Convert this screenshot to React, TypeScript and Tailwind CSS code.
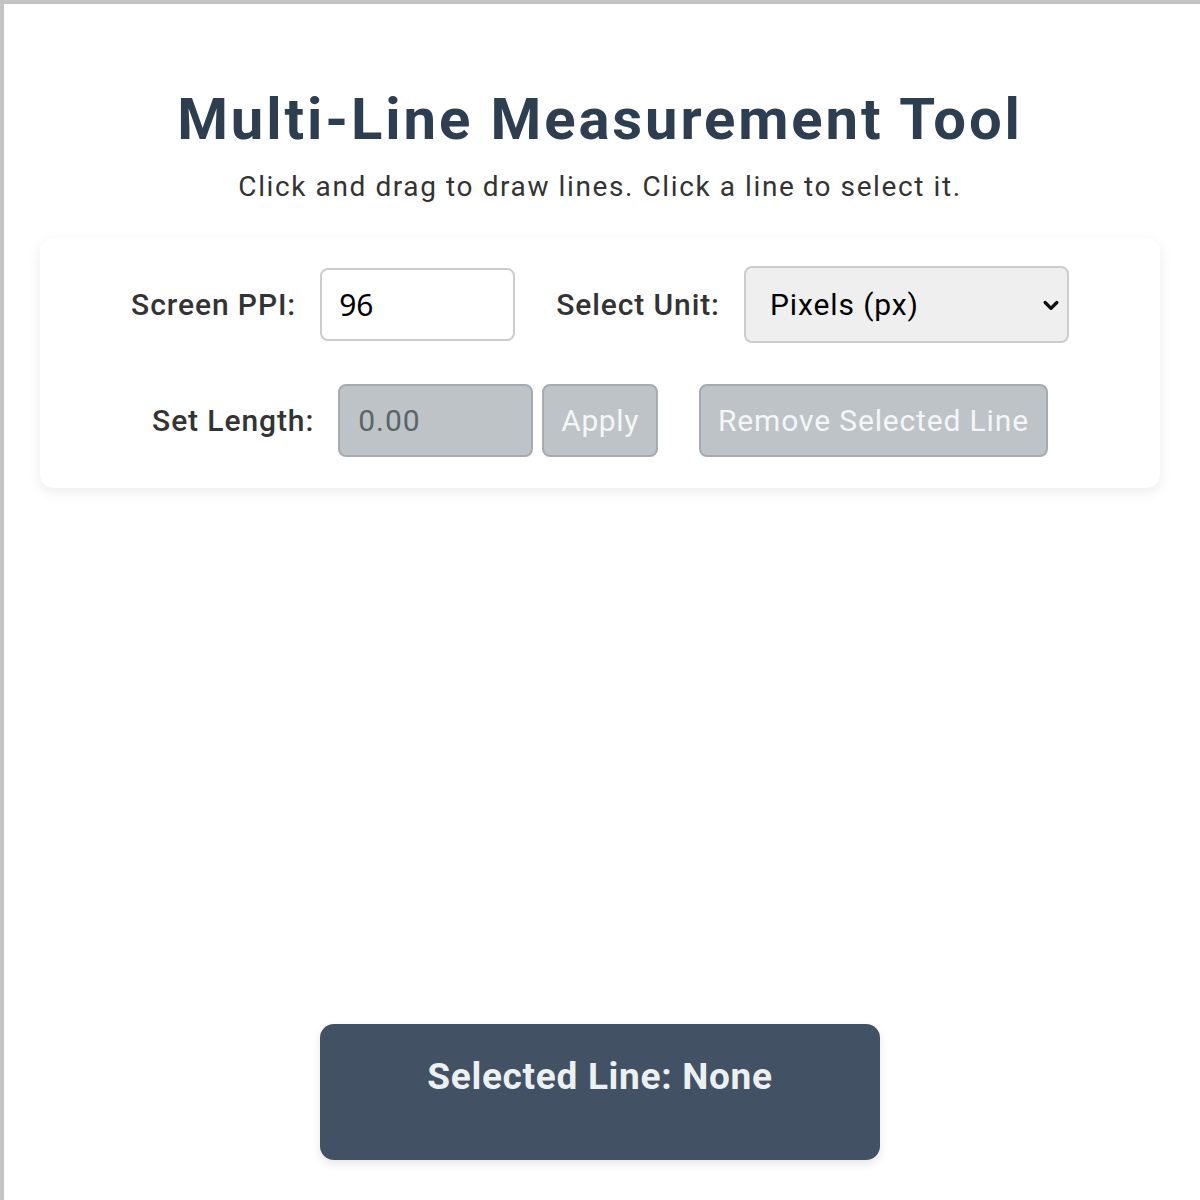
import { useState } from 'react'

export default function App() {
  const [ppi, setPpi] = useState('96')
  const [unit, setUnit] = useState('px')

  return (
    <div className="flex flex-col items-center h-[1200px] pl-9 pr-10 border-t-4 border-l-4 border-[#c4c4c4] bg-white font-['Roboto',sans-serif]">
      <h1 className="mt-[81px] text-[58px] leading-[68px] font-bold tracking-[2.9px] text-[#2c3e50]">
        Multi-Line Measurement Tool
      </h1>
      <p className="mt-[16px] text-[28px] leading-[36px] tracking-[1.6px] text-[#333333]">
        Click and drag to draw lines. Click a line to select it.
      </p>

      <section className="flex flex-col gap-[41px] w-full mt-[33px] pt-[28px] pb-[31px] rounded-[14px] bg-white shadow-[0_4px_14px_rgba(0,0,0,0.08)]">
        <div className="flex justify-center items-center">
          <label htmlFor="ppi" className="mr-6 text-[30px] font-medium tracking-[0.9px] text-[#333333]">
            Screen PPI:
          </label>
          <input
            id="ppi"
            type="text"
            value={ppi}
            onChange={(e) => setPpi(e.target.value)}
            className="w-[195px] h-[73px] px-[17px] rounded-[8px] border-2 border-[#cccccc] bg-white text-[30px] text-black font-['Noto_Sans',sans-serif] outline-none"
          />

          <label htmlFor="unit" className="ml-[41px] mr-6 text-[30px] font-medium tracking-[0.9px] text-[#333333]">
            Select Unit:
          </label>
          <div className="relative">
            <select
              id="unit"
              value={unit}
              onChange={(e) => setUnit(e.target.value)}
              className="appearance-none w-[325px] h-[77px] pl-[24px] pr-12 rounded-[8px] border-2 border-[#cccccc] bg-[#efefef] text-[30px] tracking-[0.9px] text-black outline-none"
            >
              <option value="px">Pixels (px)</option>
              <option value="in">Inches (in)</option>
              <option value="cm">Centimeters (cm)</option>
              <option value="mm">Millimeters (mm)</option>
            </select>
            <svg
              className="absolute right-[8px] top-1/2 -translate-y-1/2 pointer-events-none"
              width="20"
              height="20"
              viewBox="0 0 24 24"
              fill="none"
              stroke="#111111"
              strokeWidth="4"
              strokeLinecap="round"
              strokeLinejoin="round"
            >
              <polyline points="5 9 12 16 19 9" />
            </svg>
          </div>
        </div>

        <div className="flex justify-center items-center">
          <label htmlFor="length" className="mr-6 text-[30px] font-medium tracking-[0.9px] text-[#333333]">
            Set Length:
          </label>
          <input
            id="length"
            type="text"
            placeholder="0.00"
            disabled
            className="w-[195px] h-[73px] px-[18px] rounded-[8px] border-2 border-[#a6abaf] bg-[#bdc3c7] text-[30px] tracking-[1px] placeholder:text-[#5d6468] outline-none"
          />
          <button
            type="button"
            disabled
            className="ml-[9px] h-[73px] px-[17px] rounded-[8px] border-2 border-[#a6abaf] bg-[#bdc3c7] text-[30px] tracking-[0.6px] text-[#f4f6f7]"
          >
            Apply
          </button>
          <button
            type="button"
            disabled
            className="ml-[41px] h-[73px] px-[17px] rounded-[8px] border-2 border-[#a6abaf] bg-[#bdc3c7] text-[30px] tracking-[0.85px] text-[#f4f6f7]"
          >
            Remove Selected Line
          </button>
        </div>
      </section>

      <div className="flex-1 w-full" />

      <div className="flex flex-col items-center w-[560px] h-[136px] mb-[40px] pt-[31px] rounded-[14px] bg-[#425164] shadow-[0_4px_10px_rgba(0,0,0,0.1)]">
        <h2 className="text-[37px] leading-[44px] font-bold tracking-[0.7px] text-[#ecf0f1]">
          Selected Line: None
        </h2>
      </div>
    </div>
  )
}
